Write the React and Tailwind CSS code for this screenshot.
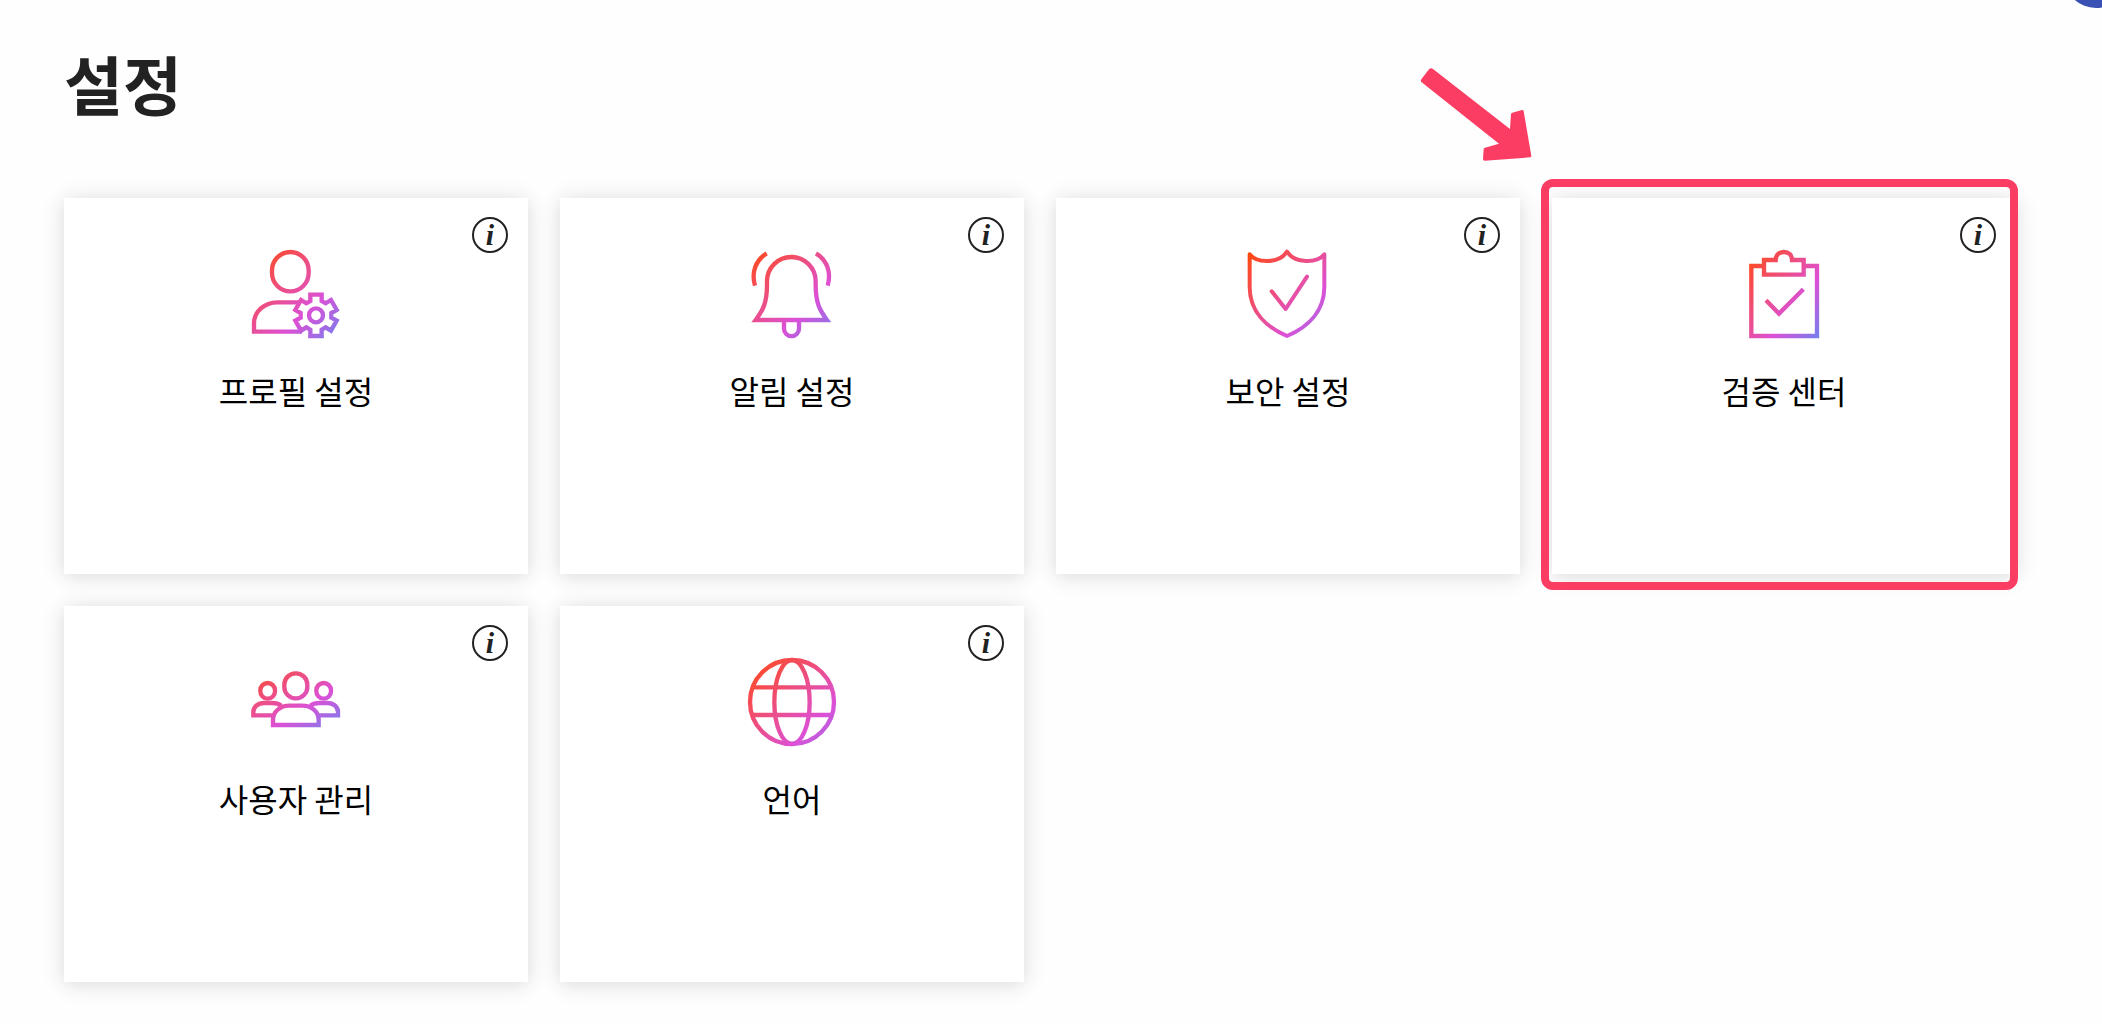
const GEAR =
  'M175 153V134H209V153L221 160L237 150L254 180L238 189V203L254 212L237 242L221 232L209 239V258H175V239L163 232L147 242L130 212L146 203V189L130 180L147 150L163 160Z';

// box = area the gradient is spread over: x, y, width, height
function GradientIcon({ id, box, strokeWidth = 13, children, ...rest }) {
  const [x, y, w, h] = box;
  return (
    <svg className="size-22 overflow-visible" viewBox="0 0 264 264" fill="none" stroke={`url(#${id})`}
      strokeWidth={strokeWidth} aria-hidden="true" {...rest}>
      <defs>
        <linearGradient id={id} gradientUnits="userSpaceOnUse" x1="0" y1="0" x2="1" y2="1"
          gradientTransform={`translate(${x} ${y}) scale(${w} ${h})`}>
          <stop offset="0" stopColor="#ff4500" />
          <stop offset="0.1" stopColor="#fc4a2c" />
          <stop offset="0.45" stopColor="#e94f96" />
          <stop offset="0.66" stopColor="#dc50d6" />
          <stop offset="1" stopColor="#757fee" />
        </linearGradient>
      </defs>
      {children}
    </svg>
  );
}

const ProfileIcon = () => (
  <GradientIcon id="grad-profile" box={[0, 0, 264, 264]}>
    <rect x="60" y="6" width="110" height="118" rx="55" />
    <path d="M143 157H76A70 63 0 0 0 6 220V245H150" />
    <path d={GEAR} />
    <circle cx="192" cy="196" r="21" />
  </GradientIcon>
);

const BellIcon = () => (
  <GradientIcon id="grad-bell" box={[0, 0, 264, 264]}>
    <path d="M57 94A73 73 0 0 1 203 94V105C203 160 216 182 237 210H23C44 182 57 160 57 105Z" />
    <path d="M108 214V236A22 22 0 0 0 153 236V214" />
    <path d="M56 10C24 30 9 65 21 107" />
    <path d="M204 10C236 30 251 65 239 107" />
  </GradientIcon>
);

const ShieldIcon = () => (
  <GradientIcon id="grad-shield" box={[12, 0, 250, 290]} strokeWidth={12} strokeLinejoin="round" strokeLinecap="round">
    <path d="M17 13C38 40 105 42 129 5C153 42 220 40 241 13V110C241 185 190 232 129 258C68 232 17 185 17 110Z" />
    <path d="M83 124L125 177L189 80" />
  </GradientIcon>
);

const ClipboardIcon = () => (
  <GradientIcon id="grad-clipboard" box={[28, 0, 208, 264]}>
    <path d="M72 48H34V258H231V48H191" />
    <path d="M72 74V30H107C107 15 118 6 132 6S156 15 156 30H191V74Z" />
    <path d="M78 151L117 191L190 118" />
  </GradientIcon>
);

const UsersIcon = () => (
  <GradientIcon id="grad-users" box={[-20, 20, 284, 187]}>
    <rect x="97" y="46" width="69" height="75" rx="34" />
    <path d="M63 201V186C63 160 85 143 113 143H150C178 143 200 160 200 186V201Z" />
    <rect x="25" y="75" width="44" height="47" rx="22" />
    <path d="M64 172H4V162C4 146 18 135 37 135H60C70 135 80 137 88 143" />
    <rect x="193" y="75" width="44" height="47" rx="22" />
    <path d="M200 172H258V162C258 146 244 135 226 135H203C193 135 183 137 175 143" />
  </GradientIcon>
);

const GlobeIcon = () => (
  <GradientIcon id="grad-globe" box={[0, 0, 300, 300]}>
    <circle cx="132" cy="132" r="126" />
    <ellipse cx="132" cy="132" rx="53" ry="126" />
    <path d="M14 88H250M14 171H250" />
  </GradientIcon>
);

const CARDS = [
  { key: 'profile', label: '프로필 설정', Icon: ProfileIcon },
  { key: 'alerts', label: '알림 설정', Icon: BellIcon },
  { key: 'security', label: '보안 설정', Icon: ShieldIcon },
  { key: 'verification', label: '검증 센터', Icon: ClipboardIcon, highlighted: true },
  { key: 'users', label: '사용자 관리', Icon: UsersIcon },
  { key: 'language', label: '언어', Icon: GlobeIcon },
];

function Highlight() {
  return (
    <>
      <div className="pointer-events-none absolute -top-[19px] -bottom-4 -left-[11px] -right-0.5 rounded-xl border-8 border-[#fc3d63]" />
      <svg className="pointer-events-none absolute -top-[130px] -left-[132px] h-[94px] w-28" viewBox="60 54 336 282"
        fill="#fc3d63" aria-hidden="true">
        <path d="M64 96Q61 92 64 88L87 58Q93 52 99 57L330 237L333 193Q333 189 337 188L366 180Q370 179 371 184L394 318Q394 322 390 322L254 332Q249 332 249 327L251 298Q251 294 255 293L297 281Z" />
      </svg>
    </>
  );
}

function SettingCard({ card }) {
  const { key, label, Icon, highlighted } = card;
  return (
    <li className="relative min-h-[376px] bg-white shadow-[0_2px_20px_rgba(0,0,0,0.15)]">
      <a href={`#${key}`} className="flex flex-col items-center pt-13">
        <Icon />
        <span className="mt-7 text-[32px] leading-12 text-black">{label}</span>
      </a>
      <button type="button" aria-label={`${label} 정보`}
        className="absolute top-[19px] right-5 flex size-9 items-center justify-center rounded-full border-2 border-[#222222] font-['Liberation_Serif',serif] text-[30px] leading-8 font-bold text-[#222222] italic">
        i
      </button>
      {highlighted && <Highlight />}
    </li>
  );
}

function App() {
  return (
    <div className="relative min-h-screen overflow-hidden bg-[#fefefe] pt-8.5 pr-[86px] pb-10 pl-16 font-['Noto_Sans_CJK_KR',sans-serif]">
      <button type="button" aria-label="도움말" className="absolute -top-14 -right-[26px] size-16 rounded-full bg-[#3950b5]" />
      <h1 className="mb-17 text-[64px] leading-24 font-bold text-[#222222]">설정</h1>
      <ul className="grid grid-cols-4 gap-8">
        {CARDS.map((card) => (
          <SettingCard key={card.key} card={card} />
        ))}
      </ul>
    </div>
  );
}

export default App;
